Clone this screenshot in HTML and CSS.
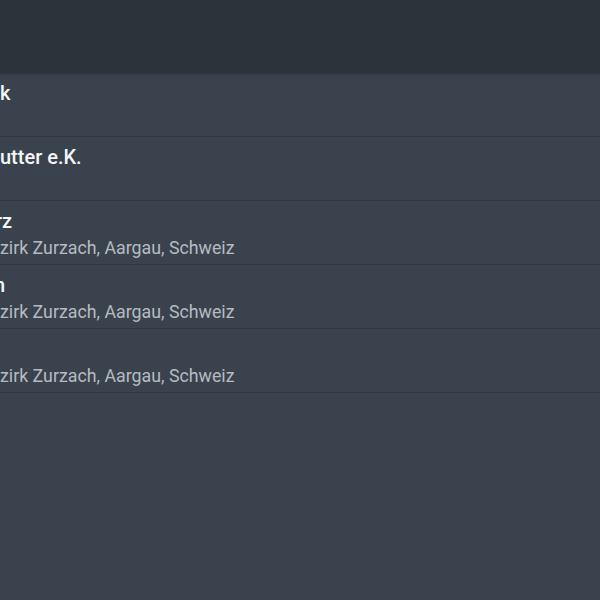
FILE: index.html
```html
<!DOCTYPE html>
<html>
<head>
<meta charset="utf-8">
<link rel="stylesheet" href="styles.css">
</head>
<body>
<header class="appbar"></header>
<ul class="list">
  <li class="row"><div class="title">k</div></li>
  <li class="row"><div class="title">utter e.K.</div></li>
  <li class="row"><div class="title clip-rz">rz</div><div class="sub">zirk Zurzach, Aargau, Schweiz</div></li>
  <li class="row"><div class="title clip-n">n</div><div class="sub">zirk Zurzach, Aargau, Schweiz</div></li>
  <li class="row"><div class="title">&nbsp;</div><div class="sub">zirk Zurzach, Aargau, Schweiz</div></li>
</ul>
</body>
</html>
```
FILE: styles.css
```css
html, body {
  margin: 0;
  padding: 0;
  height: 100%;
}
body {
  background: #3a424d;
  font-family: Roboto, "Noto Sans", sans-serif;
  overflow: hidden;
}
.appbar {
  height: 73px;
  background: #2d333b;
  box-shadow: 0 1px 4px rgba(0, 0, 0, 0.25);
  position: relative;
  z-index: 1;
}
.list {
  list-style: none;
  margin: 0;
  padding: 0;
  overflow: hidden;
}
.row {
  box-sizing: content-box;
  height: 55px;
  padding-top: 8px;
  border-bottom: 1px solid #313842;
  overflow: hidden;
}
.title {
  font-size: 20px;
  line-height: 24px;
  font-weight: 500;
  color: #f4f6f8;
  white-space: nowrap;
}
.clip-rz {
  margin-left: -5px;
}
.clip-n {
  margin-left: -6px;
}
.sub {
  margin-top: 3px;
  font-size: 17.8px;
  line-height: 24px;
  color: #b6bbc2;
  white-space: nowrap;
}
```
